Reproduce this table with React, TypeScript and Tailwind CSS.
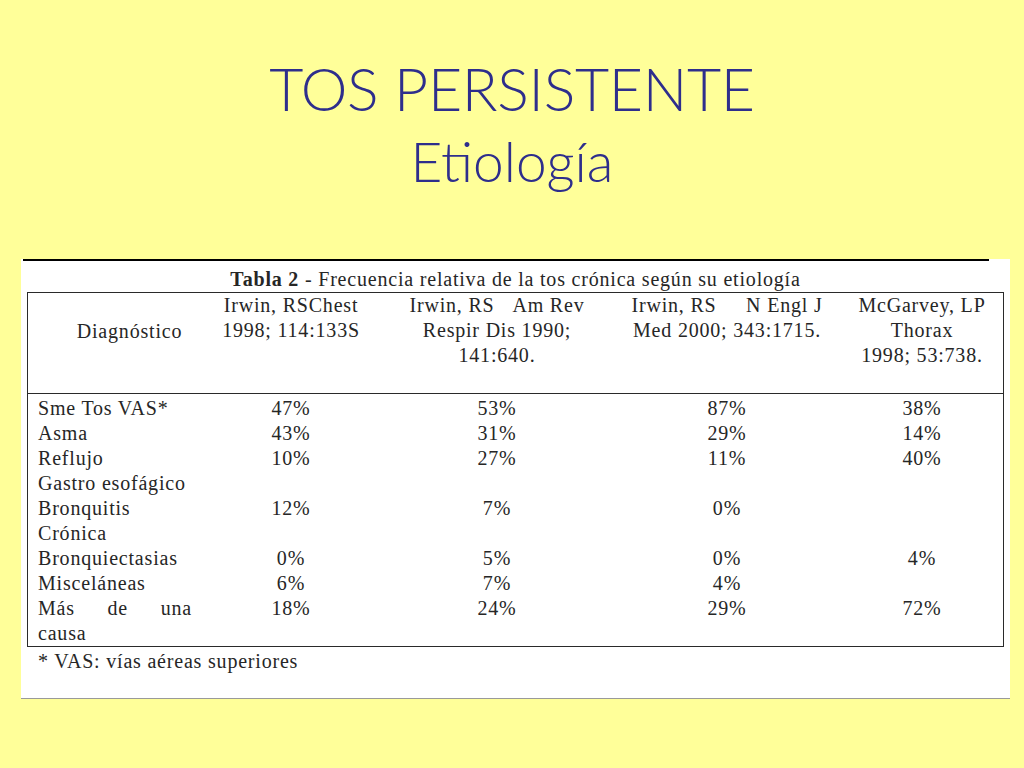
import React from 'react'

type Row = {
  label: string[]
  values: string[]
  spread?: boolean
}

const rows: Row[] = [
  { label: ['Sme Tos VAS*'], values: ['47%', '53%', '87%', '38%'] },
  { label: ['Asma'], values: ['43%', '31%', '29%', '14%'] },
  { label: ['Reflujo', 'Gastro esofágico'], values: ['10%', '27%', '11%', '40%'] },
  { label: ['Bronquitis', 'Crónica'], values: ['12%', '7%', '0%', ''] },
  { label: ['Bronquiectasias'], values: ['0%', '5%', '0%', '4%'] },
  { label: ['Misceláneas'], values: ['6%', '7%', '4%', ''] },
  { label: ['Más de una', 'causa'], values: ['18%', '24%', '29%', '72%'], spread: true },
]

const grid = 'grid grid-cols-[203px_120px_292px_168px_192px]'

function Cell({ children, last }: { children?: React.ReactNode; last?: boolean }) {
  return (
    <div className={`flex flex-col items-center ${last ? 'pl-[30px]' : ''}`}>
      {children}
    </div>
  )
}

export default function App() {
  return (
    <div className="w-[1024px] h-[768px] overflow-hidden bg-[#ffff99] font-['Liberation_Serif',serif]">
      {/* Title */}
      <div className="h-[256px] pt-[54px] text-center text-[#2e2e8c] font-['Lato','Open_Sans',sans-serif] font-light">
        <div className="text-[59px] leading-[70px] tracking-[-0.3px]">TOS PERSISTENTE</div>
        <div className="mt-[2px] text-[55px] leading-[70px]">Etiología</div>
      </div>

      {/* Table picture */}
      <div className="ml-[21px] w-[989px] h-[440px] bg-white border-b border-[#9a9a9a] text-[#262626] text-[20px] tracking-[0.8px]">
        <div className="mt-[3px] ml-[2px] w-[966px] h-[2px] bg-black" />
        <div className="h-[31px] flex items-center justify-center leading-[25px] pt-[5px]">
          <span className="font-bold">Tabla 2</span>
          <span className="whitespace-pre"> - Frecuencia relativa de la tos crónica según su etiología</span>
        </div>

        <div className="mx-[6px] border border-[#2a2a2a]">
          {/* Header */}
          <div className={`${grid} h-[101px] border-b border-[#2a2a2a] leading-[25px] whitespace-nowrap`}>
            <div className="flex flex-col items-center pt-[26px]">
              <span>Diagnóstico</span>
            </div>
            <Cell>
              <span>Irwin, RSChest</span>
              <span>1998; 114:133S</span>
            </Cell>
            <Cell>
              <span className="flex justify-between w-[175px]">
                <span>Irwin, RS</span>
                <span>Am Rev</span>
              </span>
              <span>Respir Dis 1990;</span>
              <span>141:640.</span>
            </Cell>
            <Cell>
              <span className="flex justify-between w-[191px]">
                <span>Irwin, RS</span>
                <span>N Engl J</span>
              </span>
              <span>Med 2000; 343:1715.</span>
            </Cell>
            <Cell last>
              <span>McGarvey, LP</span>
              <span>Thorax</span>
              <span>1998; 53:738.</span>
            </Cell>
          </div>

          {/* Body */}
          <div className="pt-[2px] leading-[25px] whitespace-nowrap">
            {rows.map((r, i) => (
              <div key={i} className={grid}>
                <div className="pl-[10px] flex flex-col">
                  {r.label.map((l, j) =>
                    r.spread && j === 0 ? (
                      <span key={j} className="flex justify-between w-[154px]">
                        {l.split(' ').map((w, k) => (
                          <span key={k}>{w}</span>
                        ))}
                      </span>
                    ) : (
                      <span key={j}>{l}</span>
                    )
                  )}
                </div>
                {r.values.map((v, k) => (
                  <Cell key={k} last={k === 3}>
                    <span>{v}</span>
                  </Cell>
                ))}
              </div>
            ))}
          </div>
        </div>

        <div className="pl-[17px] pt-[2px] leading-[25px]">* VAS: vías aéreas superiores</div>
      </div>
    </div>
  )
}
